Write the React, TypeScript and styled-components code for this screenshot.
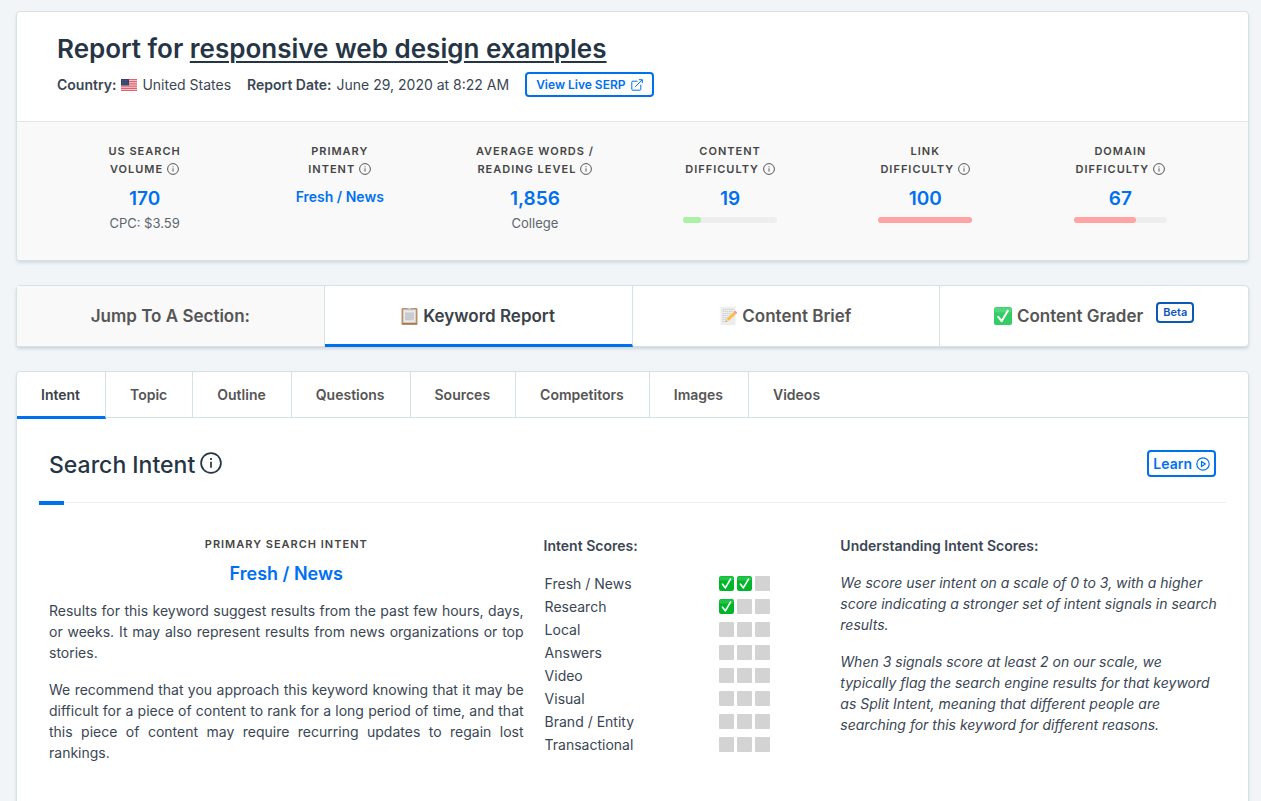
import React from "react";
import styled, { createGlobalStyle, css } from "styled-components";

const BLUE = "#0070f3";
const INK = "#263545";
const BODY = "#3a4654";
const LINE = "#d6e1e6";

const GlobalStyle = createGlobalStyle`
  *, *::before, *::after { box-sizing: border-box; }
  body {
    margin: 0;
    background: #f1f5f8;
    color: ${BODY};
    font-family: Inter, "Liberation Sans", sans-serif;
    font-size: 14px;
    line-height: 21px;
    overflow-x: hidden;
  }
  h1, h2, h3, p { margin: 0; padding: 0; }
  a { color: inherit; text-decoration: none; }
  svg { display: block; flex: none; }
`;

const Page = styled.main`
  display: flex;
  flex-direction: column;
  gap: 24px;
  min-height: 100vh;
  padding: 11px 12px 0 16px;
`;

const Card = styled.section`
  background: #fff;
  border: 1px solid ${LINE};
  border-radius: 4px;
  box-shadow: 0 2px 3px rgba(50, 70, 90, 0.14);
  overflow: hidden;
`;

const ReportHeader = styled.header`
  padding: 19px 40px 24px;
`;

const Title = styled.h1`
  color: ${INK};
  font-size: 26px;
  font-weight: 600;
  line-height: 36px;

  span {
    text-decoration: underline;
    text-decoration-thickness: 2px;
    text-underline-offset: 3px;
  }
`;

const Meta = styled.div`
  display: flex;
  flex-wrap: wrap;
  align-items: center;
  gap: 16px;
  margin-top: 5px;
`;

const MetaItem = styled.span`
  display: flex;
  align-items: center;
  gap: 5px;

  strong { font-weight: 600; }
`;

const OutlineLink = styled.a<{ $large?: boolean }>`
  display: inline-flex;
  align-items: center;
  gap: ${(p) => (p.$large ? 4 : 5)}px;
  height: ${(p) => (p.$large ? 27 : 25)}px;
  padding: 0 ${(p) => (p.$large ? 4 : 9)}px;
  border: 2px solid ${BLUE};
  border-radius: 4px;
  color: ${BLUE};
  font-size: ${(p) => (p.$large ? 14 : 12)}px;
  font-weight: 600;
`;

const Stats = styled.div`
  display: grid;
  grid-template-columns: repeat(6, 1fr);
  min-height: 139px;
  padding: 20px 30px;
  border-top: 1px solid #e2e6e8;
  background: #f9f9f9;
`;

const Stat = styled.div`
  display: flex;
  flex-direction: column;
  align-items: center;
  text-align: center;
`;

const Label = styled.h3`
  color: #454545;
  font-size: 11px;
  font-weight: 600;
  line-height: 18px;
  letter-spacing: 1px;
  text-align: center;
  text-transform: uppercase;
`;

const LabelRow = styled.span`
  display: flex;
  align-items: center;
  justify-content: center;
  gap: 4px;
`;

const Value = styled.strong<{ $small?: boolean }>`
  margin-top: ${(p) => (p.$small ? 8 : 9)}px;
  color: ${BLUE};
  font-size: ${(p) => (p.$small ? 14 : 19)}px;
  font-weight: 600;
  line-height: ${(p) => (p.$small ? 22 : 24)}px;
`;

const Note = styled.span`
  margin-top: 2px;
  color: #5d666e;
  font-size: 13px;
`;

const Meter = styled.div`
  width: 48%;
  height: 6px;
  margin-top: 6px;
  border-radius: 3px;
  background: #eee;
`;

const MeterFill = styled.div<{ $good?: boolean }>`
  height: 6px;
  border-radius: 3px;
  background: ${(p) => (p.$good ? "#aaf0a5" : "#ffa3a3")};
`;

const SectionNav = styled.nav`
  display: grid;
  grid-template-columns: repeat(4, 1fr);
  border: 1px solid ${LINE};
  border-radius: 4px;
  background: #fff;
  box-shadow: 0 2px 3px rgba(50, 70, 90, 0.18);
`;

const navCell = css`
  display: flex;
  align-items: center;
  justify-content: center;
  gap: 5px;
  height: 60px;
  border-right: 1px solid ${LINE};
  font-size: 17px;
  font-weight: 600;
`;

const NavLabel = styled.span`
  ${navCell}
  background: #f9f9f9;
  color: #555;
`;

const NavLink = styled.a<{ $active?: boolean }>`
  ${navCell}
  color: #555;

  ${(p) =>
    p.$active &&
    css`
      height: 61px;
      margin-bottom: -1px;
      padding-top: 2px;
      border-bottom: 3px solid ${BLUE};
      color: #3a424a;
    `}

  &:last-child { border-right: 0; }
`;

const Beta = styled.span`
  align-self: flex-start;
  height: 21px;
  margin: 16px 0 0 8px;
  padding: 0 5px;
  border: 2px solid #0a58b8;
  border-radius: 4px;
  color: #0a58b8;
  font-size: 11px;
  font-weight: 600;
  line-height: 17px;
`;

const Tabs = styled.div`
  display: flex;
  border-bottom: 1px solid ${LINE};
`;

const Tab = styled.button<{ $active?: boolean }>`
  height: 45px;
  padding: 0 25px 0 24px;
  border: 0;
  border-right: 1px solid ${LINE};
  background: none;
  color: #555;
  font: 600 14px/21px Inter, "Liberation Sans", sans-serif;

  ${(p) =>
    p.$active &&
    css`
      height: 47px;
      margin-bottom: -2px;
      padding-top: 1px;
      border-bottom: 3px solid ${BLUE};
      color: #3a424a;
    `}

  &:last-child { border-right: 0; }
`;

const Panel = styled.div`
  min-height: 430px;
  padding: 32px 22px;
`;

const PanelHead = styled.div`
  display: flex;
  align-items: flex-start;
  justify-content: space-between;
  height: 53px;
  padding: 0 10px;
  border-bottom: 1px solid #eee;
`;

const Accent = styled.div`
  width: 25px;
  height: 4px;
  margin-top: -2px;
  background: ${BLUE};
`;

const PanelTitle = styled.h2`
  display: flex;
  align-items: center;
  gap: 5px;
  color: ${INK};
  font-size: 23px;
  font-weight: 500;
  line-height: 30px;

  svg { margin-bottom: 4px; }
`;

const Columns = styled.div`
  display: grid;
  grid-template-columns: 5fr 3fr 4fr;
  margin-top: 30px;
`;

const Column = styled.div`
  display: flex;
  flex-direction: column;
  min-width: 0;
  padding: 0 10px;

  &:last-child { padding-right: 7px; }
`;

const IntentName = styled.strong`
  margin: 8px 0 14px;
  color: ${BLUE};
  font-size: 18px;
  font-weight: 600;
  line-height: 25px;
  text-align: center;
`;

const Copy = styled.p<{ $italic?: boolean }>`
  margin-bottom: 16px;
  font-style: ${(p) => (p.$italic ? "italic" : "normal")};
  text-align: ${(p) => (p.$italic ? "left" : "justify")};
`;

const ColumnTitle = styled.h3`
  margin-bottom: 16px;
  font-size: 14px;
  font-weight: 600;
  line-height: 21px;
`;

const ScoreTable = styled.table`
  width: 228px;
  border-collapse: collapse;

  th, td { height: 23px; padding: 0 1px; }
  th { font-weight: 400; text-align: left; }
  td { width: 54px; }
`;

const Marks = styled.div`
  display: flex;
  gap: 3px;
`;

const Mark = styled.span`
  width: 15px;
  height: 15px;
  border-radius: 1px;
  background: #d3d3d3;
`;

const InfoIcon = ({ size, stroke }: { size: number; stroke: number }) => (
  <svg width={size} height={size} viewBox="0 0 24 24" fill="none" stroke="currentColor" strokeWidth={stroke} aria-hidden="true">
    <circle cx="12" cy="12" r="10.8" />
    <path d="M12 10.6v6.6" />
    <path d="M12 6.6v2" />
  </svg>
);

const ExternalIcon = () => (
  <svg width="12" height="12" viewBox="0 0 12 12" fill="none" stroke="currentColor" strokeWidth="1" aria-hidden="true">
    <path d="M6.5 2.2H1.8a1 1 0 0 0-1 1v7a1 1 0 0 0 1 1h7a1 1 0 0 0 1-1V5.6M4.2 7.8l7-7M7.8.7h3.5v3.5" />
  </svg>
);

const PlayIcon = () => (
  <svg width="14" height="14" viewBox="0 0 14 14" fill="none" stroke="currentColor" strokeWidth="1.2" aria-hidden="true">
    <circle cx="7" cy="7" r="6.2" />
    <path d="M5.5 4.4 9.4 7 5.5 9.6z" strokeLinejoin="round" />
  </svg>
);

const Flag = () => (
  <svg width="16" height="12" viewBox="0 0 16 12" role="img" aria-label="US flag">
    <rect width="16" height="12" fill="#f6dfe2" />
    <path d="M0 .6h16M0 2.4h16M0 4.2h16M0 6h16M0 7.8h16M0 9.6h16M0 11.4h16" stroke="#dd5561" strokeWidth="1" />
    <rect width="8" height="6.4" fill="#34416f" />
    <path d="M1 1.5h6M1 3.2h6M1 4.9h6" stroke="#6f7aa0" strokeWidth=".6" strokeDasharray=".7 .9" />
  </svg>
);

const CheckIcon = ({ size, light }: { size: number; light?: boolean }) => (
  <svg width={size} height={size} viewBox="0 0 18 18" role="img" aria-label="Yes">
    <rect width="18" height="18" rx="2.6" fill={light ? "#33cc66" : "#00b52a"} />
    <rect x=".6" y=".5" width="16.8" height="5" rx="2" fill={light ? "#5fdc88" : "#2fcb55"} opacity=".7" />
    <path d="M4.2 9.8 7.6 14.2 13.8 3.8" fill="none" stroke="#fff" strokeWidth="2" strokeLinecap="round" strokeLinejoin="round" />
  </svg>
);

const ClipboardIcon = () => (
  <svg width="17" height="20" viewBox="0 0 17 20" aria-hidden="true">
    <rect x=".5" y="2" width="16" height="16.6" rx="1.4" fill="#bd9068" />
    <path d="M.8 18h15.4" stroke="#966c49" strokeWidth="1.2" />
    <rect x="2.3" y="3.6" width="12.4" height="13" fill="#e9eaeb" />
    <rect x="4" y="6.4" width="9" height="8" fill="#cfd0d1" />
    <path d="M4.5 7.6h8M4.5 9.5h8M4.5 11.5h8M4.5 13.4h6" stroke="#c0c2c4" strokeWidth=".7" />
    <path d="M4.2 4.2V2.7h2.6a1.9 1.9 0 0 1 3.4 0h2.6v1.5z" fill="#b4bec4" />
    <circle cx="8.5" cy="2.2" r=".7" fill="#eef2f4" />
  </svg>
);

const MemoIcon = () => (
  <svg width="17" height="20" viewBox="0 0 17 20" aria-hidden="true">
    <rect x=".5" y=".8" width="15" height="18.4" fill="#ededed" />
    <path d="M2.5 3.5h11M2.5 5.5h10M2.5 7.5h8M2.5 9.5h7M2.5 11.5h5M2.5 13.5h4M2.5 15.5h5" stroke="#c9c9c9" strokeWidth=".8" strokeDasharray="1.6 .5" />
    <path d="m5.6 15.8 1-3.4 7-6.6 2.4 2.4-7 6.6z" fill="#fbc85c" />
    <path d="m7.8 13.6 7-6.6" stroke="#e8aa48" strokeWidth=".8" />
    <path d="m13.6 5.8 1-.9c.8-.6 2.9 1.5 2.3 2.3l-.9 1z" fill="#ee97a4" />
    <path d="m5.6 15.8 1-3.4 2.4 2.4z" fill="#efd9b5" />
    <path d="m5.6 15.8.4-1.3.9.9z" fill="#666" />
  </svg>
);

type StatData = {
  lines: [string, string];
  value: string;
  small?: boolean;
  note?: string;
  meter?: number;
  good?: boolean;
};

const stats: StatData[] = [
  { lines: ["US Search", "Volume"], value: "170", note: "CPC: $3.59" },
  { lines: ["Primary", "Intent"], value: "Fresh / News", small: true },
  { lines: ["Average Words /", "Reading Level"], value: "1,856", note: "College" },
  { lines: ["Content", "Difficulty"], value: "19", meter: 19, good: true },
  { lines: ["Link", "Difficulty"], value: "100", meter: 100 },
  { lines: ["Domain", "Difficulty"], value: "67", meter: 67 },
];

const tabs = ["Intent", "Topic", "Outline", "Questions", "Sources", "Competitors", "Images", "Videos"];

const scores: [string, number][] = [
  ["Fresh / News", 2],
  ["Research", 1],
  ["Local", 0],
  ["Answers", 0],
  ["Video", 0],
  ["Visual", 0],
  ["Brand / Entity", 0],
  ["Transactional", 0],
];

export default function App() {
  return (
    <>
      <GlobalStyle />
      <Page>
        <Card>
          <ReportHeader>
            <Title>
              Report for <span>responsive web design examples</span>
            </Title>
            <Meta>
              <MetaItem>
                <strong>Country:</strong>
                <Flag />
                United States
              </MetaItem>
              <MetaItem>
                <strong>Report Date:</strong>
                June 29, 2020 at 8:22 AM
              </MetaItem>
              <OutlineLink href="#serp">
                View Live SERP
                <ExternalIcon />
              </OutlineLink>
            </Meta>
          </ReportHeader>
          <Stats>
            {stats.map((s) => (
              <Stat key={s.lines.join(" ")}>
                <Label>
                  {s.lines[0]}
                  <LabelRow>
                    {s.lines[1]}
                    <InfoIcon size={12} stroke={1.8} />
                  </LabelRow>
                </Label>
                <Value $small={s.small}>{s.value}</Value>
                {s.note && <Note>{s.note}</Note>}
                {s.meter !== undefined && (
                  <Meter>
                    <MeterFill $good={s.good} style={{ width: `${s.meter}%` }} />
                  </Meter>
                )}
              </Stat>
            ))}
          </Stats>
        </Card>

        <SectionNav>
          <NavLabel>Jump To A Section:</NavLabel>
          <NavLink href="#report" $active>
            <ClipboardIcon />
            Keyword Report
          </NavLink>
          <NavLink href="#brief">
            <MemoIcon />
            Content Brief
          </NavLink>
          <NavLink href="#grader">
            <CheckIcon size={18} light />
            Content Grader
            <Beta>Beta</Beta>
          </NavLink>
        </SectionNav>

        <Card>
          <Tabs role="tablist">
            {tabs.map((t, i) => (
              <Tab key={t} type="button" role="tab" aria-selected={i === 0} $active={i === 0}>
                {t}
              </Tab>
            ))}
          </Tabs>
          <Panel>
            <PanelHead>
              <PanelTitle>
                Search Intent
                <InfoIcon size={22} stroke={1.9} />
              </PanelTitle>
              <OutlineLink href="#learn" $large>
                Learn
                <PlayIcon />
              </OutlineLink>
            </PanelHead>
            <Accent />
            <Columns>
              <Column>
                <Label>Primary Search Intent</Label>
                <IntentName>Fresh / News</IntentName>
                <Copy>
                  Results for this keyword suggest results from the past few hours, days, or weeks. It may also
                  represent results from news organizations or top stories.
                </Copy>
                <Copy>
                  We recommend that you approach this keyword knowing that it may be difficult for a piece of content
                  to rank for a long period of time, and that this piece of content may require recurring updates to
                  regain lost rankings.
                </Copy>
              </Column>
              <Column>
                <ColumnTitle id="scores">Intent Scores:</ColumnTitle>
                <ScoreTable aria-labelledby="scores">
                  <tbody>
                    {scores.map(([name, score]) => (
                      <tr key={name}>
                        <th scope="row">{name}</th>
                        <td>
                          <Marks>
                            {[0, 1, 2].map((n) => (n < score ? <CheckIcon key={n} size={15} /> : <Mark key={n} />))}
                          </Marks>
                        </td>
                      </tr>
                    ))}
                  </tbody>
                </ScoreTable>
              </Column>
              <Column>
                <ColumnTitle>Understanding Intent Scores:</ColumnTitle>
                <Copy $italic>
                  We score user intent on a scale of 0 to 3, with a higher score indicating a stronger set of intent
                  signals in search results.
                </Copy>
                <Copy $italic>
                  When 3 signals score at least 2 on our scale, we typically flag the search engine results for that
                  keyword as Split Intent, meaning that different people are searching for this keyword for different
                  reasons.
                </Copy>
              </Column>
            </Columns>
          </Panel>
        </Card>
      </Page>
    </>
  );
}
